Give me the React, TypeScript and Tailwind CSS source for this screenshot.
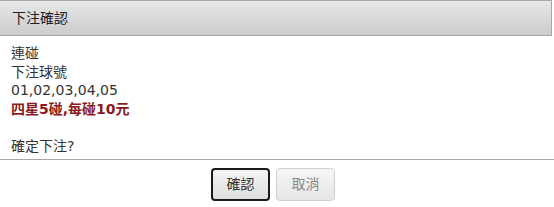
export default function App() {
  return (
    <div
      className="w-[554px] h-[207px] bg-white overflow-hidden"
      style={{ fontFamily: '"DejaVu Sans", Verdana, "Noto Sans CJK TC", sans-serif' }}
    >
      <div className="h-[36px] border-t border-b border-[#a8a8a8] bg-gradient-to-b from-[#e8e8e8] to-[#cccccc] flex items-center pl-[12px] mr-[2px] border-r">
        <span className="text-[14px] text-[#222]">下注確認</span>
      </div>
      <div className="h-[124px] pt-[8px] pl-[11px] text-[14px] leading-[18.5px] text-[#333] border-b border-[#a8a8a8]">
        <div>連碰</div>
        <div>下注球號</div>
        <div>01,02,03,04,05</div>
        <div className="font-bold text-[#8b1a1a]">四星5碰,每碰10元</div>
        <div>&nbsp;</div>
        <div>確定下注?</div>
      </div>
      <div className="flex justify-center gap-[6px] pt-[8px] pr-[8px]">
        <button className="w-[59px] h-[33px] rounded-[4px] border-2 border-[#1a1a1a] bg-gradient-to-b from-[#f4f4f4] to-[#dedede] text-[14px] text-[#333]">
          確認
        </button>
        <button className="w-[59px] h-[33px] rounded-[4px] border border-[#d0d0d0] bg-gradient-to-b from-[#f6f6f6] to-[#e6e6e6] text-[14px] text-[#888]">
          取消
        </button>
      </div>
    </div>
  );
}
